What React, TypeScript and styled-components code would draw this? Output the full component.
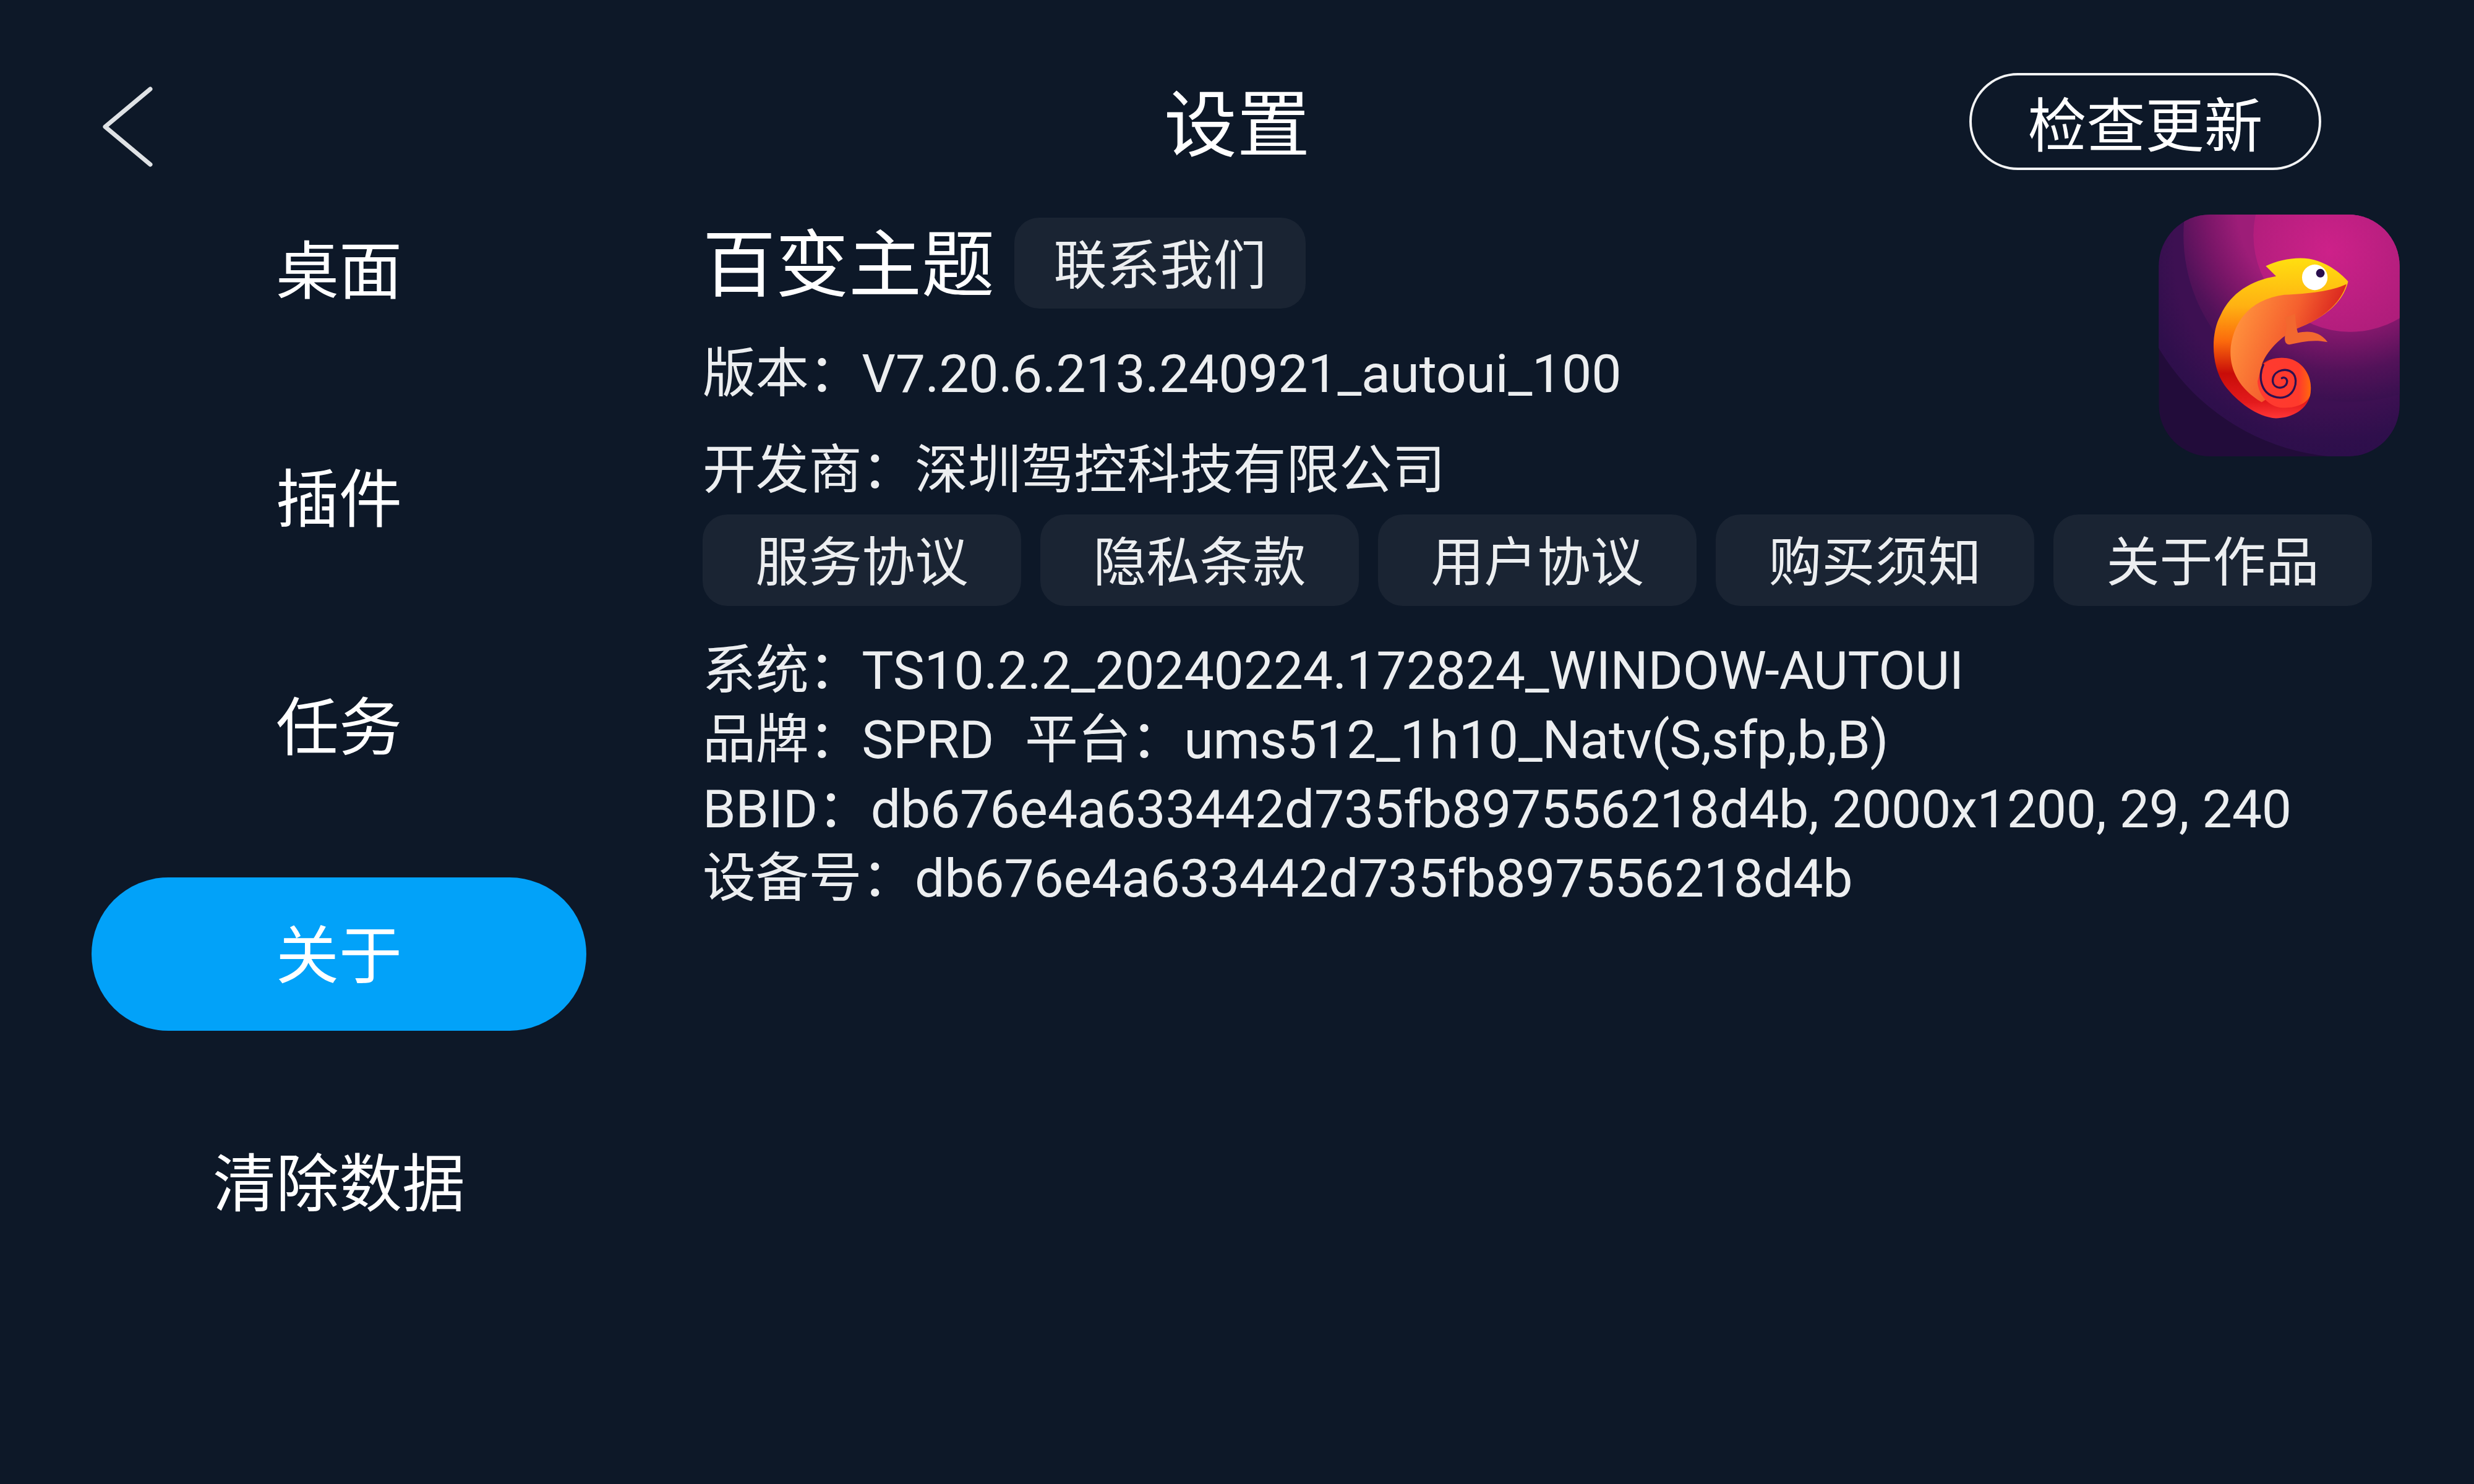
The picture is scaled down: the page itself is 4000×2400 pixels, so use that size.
import styled, { createGlobalStyle } from "styled-components";

const GlobalStyle = createGlobalStyle`
  html, body {
    margin: 0;
    padding: 0;
    background: #0d1828;
  }
  body {
    font-family: Roboto, "Noto Sans CJK SC", sans-serif;
    color: #fff;
  }
`;

const navItems = ["桌面", "插件", "任务", "关于", "清除数据"];
const linkItems = ["服务协议", "隐私条款", "用户协议", "购买须知", "关于作品"];

function BackIcon() {
  return (
    <BackSvg viewBox="0 0 90 136">
      <path d="M78 7 L5 68 L78 129" fill="none" stroke="#dfe2e5" strokeWidth="7" strokeLinecap="round" strokeLinejoin="round" />
    </BackSvg>
  );
}

function AppIcon() {
  return (
    <IconSvg viewBox="270 140 1170 1175">
      <defs>
        <clipPath id="tile">
          <rect x="270" y="140" width="1170" height="1175" rx="250" />
        </clipPath>
        <radialGradient id="band1" gradientUnits="userSpaceOnUse" cx="1100" cy="320" r="480">
          <stop offset="0" stopColor="#cd2189" />
          <stop offset="1" stopColor="#ad1d7a" />
        </radialGradient>
        <radialGradient id="band2" gradientUnits="userSpaceOnUse" cx="1150" cy="100" r="1000">
          <stop offset="0.5" stopColor="#9d1d78" />
          <stop offset="0.65" stopColor="#7a1668" />
          <stop offset="0.8" stopColor="#521259" />
          <stop offset="0.95" stopColor="#3a1050" />
          <stop offset="1" stopColor="#350f4d" />
        </radialGradient>
        <radialGradient id="band3" gradientUnits="userSpaceOnUse" cx="1100" cy="320" r="1080">
          <stop offset="0.7" stopColor="#3d1052" />
          <stop offset="0.85" stopColor="#2f0f4c" />
          <stop offset="1" stopColor="#2b0e4a" />
        </radialGradient>
        <linearGradient id="body" gradientUnits="userSpaceOnUse" x1="0" y1="350" x2="0" y2="1130">
          <stop offset="0" stopColor="#ffdf10" />
          <stop offset="0.3" stopColor="#ffb112" />
          <stop offset="0.52" stopColor="#fb6a0c" />
          <stop offset="0.72" stopColor="#c80d08" />
          <stop offset="0.9" stopColor="#e31a1c" />
          <stop offset="1" stopColor="#ff3636" />
        </linearGradient>
        <linearGradient id="belly" gradientUnits="userSpaceOnUse" x1="640" y1="700" x2="1050" y2="860">
          <stop offset="0" stopColor="#ff8f3c" />
          <stop offset="0.55" stopColor="#f5602e" />
          <stop offset="1" stopColor="#d9241f" />
        </linearGradient>
        <linearGradient id="tail" gradientUnits="userSpaceOnUse" x1="770" y1="960" x2="1010" y2="960">
          <stop offset="0" stopColor="#ff3a30" />
          <stop offset="0.75" stopColor="#ff3a2c" />
          <stop offset="1" stopColor="#ff6a0c" />
        </linearGradient>
      </defs>
      <g clipPath="url(#tile)">
        <rect x="270" y="140" width="1170" height="1175" fill="#220c3a" />
        <circle cx="1200" cy="240" r="1080" fill="url(#band3)" />
        <circle cx="1200" cy="240" r="810" fill="url(#band2)" />
        <circle cx="1200" cy="240" r="470" fill="url(#band1)" />
      </g>
      <path
        fill="url(#body)"
        d="M790 390 C850 362 930 345 1000 355 C1080 368 1150 420 1190 465 C1170 550 1100 630 950 690 C880 720 800 790 770 870 C800 835 880 825 930 850 C990 880 1020 950 1005 1020 C985 1100 900 1130 840 1130 C750 1125 650 1050 590 970 C525 880 520 720 570 630 C620 520 720 460 840 440 Z"
      />
      <path
        fill="url(#belly)"
        d="M1182 478 C1110 512 1000 525 880 530 C730 550 640 640 620 780 C610 880 650 980 770 1052 L850 1000 L770 870 C800 790 880 720 950 690 C1100 630 1160 550 1182 478 Z"
      />
      <path fill="url(#tail)" d="M768 880 C800 835 880 825 930 850 C990 880 1020 950 1005 1020 C990 1060 930 1085 860 1078 C790 1068 750 1000 750 950 Z" />
      <path
        fill="#f2682f"
        d="M882 640 L932 622 C935 660 938 690 946 715 C990 705 1050 703 1090 760 C1020 745 960 760 905 772 C880 770 878 745 888 705 C892 680 888 660 882 640 Z"
      />
      <circle cx="1028" cy="445" r="62" fill="#fff" />
      <circle cx="1055" cy="425" r="21" fill="#2a0f4c" />
      <path
        fill="none"
        stroke="#2d1050"
        strokeWidth="10"
        strokeLinecap="round"
        d="M778 870 C750 930 765 1025 860 1030 C930 1028 950 950 925 915 C895 880 835 895 825 935 C815 980 865 995 888 968 C902 945 885 925 868 935"
      />
    </IconSvg>
  );
}

export default function App() {
  return (
    <Page>
      <GlobalStyle />
      <Header>
        <BackButton>
          <BackIcon />
        </BackButton>
        <Title>设置</Title>
        <HeaderRight>
          <UpdateButton>检查更新</UpdateButton>
        </HeaderRight>
      </Header>
      <Main>
        <Nav>
          {navItems.map((item) => (
            <NavItem key={item} $active={item === "关于"}>
              {item}
            </NavItem>
          ))}
        </Nav>
        <Content>
          <TopBlock>
            <div>
              <HeadingRow>
                <Heading>百变主题</Heading>
                <ContactPill>联系我们</ContactPill>
              </HeadingRow>
              <MetaLines>
                <InfoLine>版本：V7.20.6.213.240921_autoui_100</InfoLine>
                <InfoLine>开发商：深圳驾控科技有限公司</InfoLine>
              </MetaLines>
            </div>
            <AppIcon />
          </TopBlock>
          <LinkRow>
            {linkItems.map((item) => (
              <LinkPill key={item}>{item}</LinkPill>
            ))}
          </LinkRow>
          <SystemLines>
            <InfoLine>系统：TS10.2.2_20240224.172824_WINDOW-AUTOUI</InfoLine>
            <InfoLine>
              品牌：SPRD<Platform>平台：ums512_1h10_Natv(S,sfp,b,B)</Platform>
            </InfoLine>
            <InfoLine>BBID：db676e4a633442d735fb897556218d4b, 2000x1200, 29, 240</InfoLine>
            <InfoLine>设备号：db676e4a633442d735fb897556218d4b</InfoLine>
          </SystemLines>
        </Content>
      </Main>
    </Page>
  );
}

const Page = styled.div`
  width: 4000px;
  height: 2400px;
  background: #0d1828;
  overflow: hidden;
`;

const Header = styled.header`
  display: grid;
  grid-template-columns: 1fr auto 1fr;
  align-items: center;
  height: 157px;
  padding: 118px 165px 37px 165px;
`;

const BackButton = styled.div`
  display: flex;
  align-items: center;
  padding-top: 16px;
`;

const BackSvg = styled.svg`
  width: 90px;
  height: 136px;
`;

const Title = styled.h1`
  margin: 0;
  padding-top: 16px;
  font-size: 118px;
  font-weight: 400;
  line-height: 141px;
`;

const HeaderRight = styled.div`
  display: flex;
  justify-content: flex-end;
  padding-right: 82px;
`;

const UpdateButton = styled.div`
  box-sizing: border-box;
  display: flex;
  align-items: center;
  justify-content: center;
  width: 569px;
  height: 157px;
  border: 4px solid #f2f3f4;
  border-radius: 79px;
  font-size: 95px;
`;

const Main = styled.main`
  display: flex;
  padding-left: 148px;
`;

const Nav = styled.nav`
  display: flex;
  flex-direction: column;
  gap: 121px;
  width: 800px;
  flex: none;
`;

const NavItem = styled.div<{ $active?: boolean }>`
  box-sizing: border-box;
  display: flex;
  align-items: center;
  justify-content: center;
  height: 248px;
  padding-bottom: 12px;
  border-radius: 124px;
  font-size: 102px;
  background: ${(p) => (p.$active ? "#02a2f9" : "transparent")};
`;

const Content = styled.section`
  flex: 1;
  margin-left: 188px;
  padding: 35px 120px 0 0;
`;

const TopBlock = styled.div`
  display: flex;
  justify-content: space-between;
  align-items: flex-start;
`;

const IconSvg = styled.svg`
  width: 390px;
  height: 391px;
  flex: none;
`;

const HeadingRow = styled.div`
  display: flex;
  align-items: flex-start;
  gap: 32px;
  margin-top: 5px;
`;

const Heading = styled.h2`
  margin: 0;
  padding-top: 10px;
  font-size: 118px;
  font-weight: 400;
  line-height: 137px;
`;

const Pill = styled.div`
  box-sizing: border-box;
  display: flex;
  align-items: center;
  justify-content: center;
  height: 147px;
  padding-bottom: 7px;
  border-radius: 40px;
  background: #1a2433;
  font-size: 86px;
  color: #eceef0;
`;

const ContactPill = styled(Pill)`
  width: 471px;
`;

const MetaLines = styled.div`
  display: flex;
  flex-direction: column;
  gap: 44px;
  margin-top: 50px;
`;

const InfoLine = styled.div`
  font-size: 86px;
  line-height: 112px;
  letter-spacing: -0.25px;
  color: #eceef0;
  white-space: nowrap;
`;

const Platform = styled.span`
  margin-left: 50px;
`;

const LinkRow = styled.div`
  display: flex;
  gap: 31px;
  margin-top: 15px;
`;

const LinkPill = styled(Pill)`
  width: 515px;
  height: 148px;
`;

const SystemLines = styled.div`
  margin-top: 49px;
`;
